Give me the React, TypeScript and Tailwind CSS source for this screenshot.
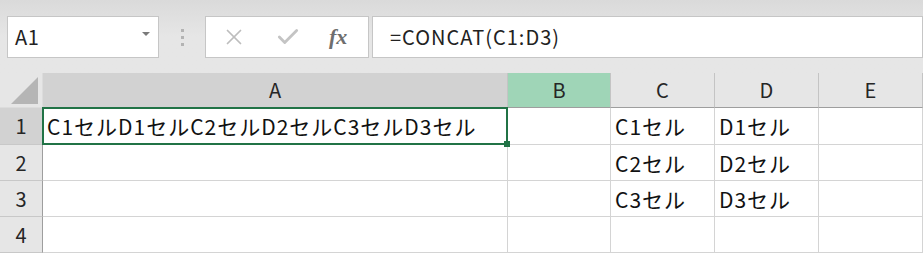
import { X, Check } from "lucide-react";

const cols = [
  { key: "A", w: "w-[465px]", head: "bg-[#d2d2d2]" },
  { key: "B", w: "w-[103px]", head: "bg-[#9fd5b7]" },
  { key: "C", w: "w-[104px]", head: "bg-[#e6e6e6]" },
  { key: "D", w: "w-[104px]", head: "bg-[#e6e6e6]" },
  { key: "E", w: "flex-1", head: "bg-[#e6e6e6]" },
];

const rows: { n: number; h: string; cells: string[] }[] = [
  { n: 1, h: "h-[37px]", cells: ["C1セルD1セルC2セルD2セルC3セルD3セル", "", "C1セル", "D1セル", ""] },
  { n: 2, h: "h-[36px]", cells: ["", "", "C2セル", "D2セル", ""] },
  { n: 3, h: "h-[36px]", cells: ["", "", "C3セル", "D3セル", ""] },
  { n: 4, h: "h-[36px]", cells: ["", "", "", "", ""] },
];

function App() {
  return (
    <div
      className="w-[923px] h-[253px] overflow-hidden bg-white text-[#111]"
      style={{ fontFamily: '"Noto Sans CJK JP", "Noto Sans", sans-serif' }}
    >
      {/* 数式バー */}
      <div className="h-[73px] bg-gradient-to-b from-[#dadada] via-[#e6e6e6] to-[#e6e6e6] flex items-start pt-[16px] pl-[7px]">
        <div className="w-[152px] h-[42px] bg-white border border-[#c6c6c6] flex items-center justify-between pl-[7px] pr-[8px]">
          <span className="text-[20px] leading-none text-[#222] tracking-[0.5px]">A1</span>
          <div className="w-0 h-0 border-l-[4px] border-r-[4px] border-t-[4px] border-l-transparent border-r-transparent border-t-[#7a7a7a] mb-[6px]" />
        </div>
        <div className="w-[46px] h-[42px] flex flex-col items-center justify-center gap-[4px]">
          <div className="w-[3px] h-[3px] bg-[#b3b3b3]" />
          <div className="w-[3px] h-[3px] bg-[#b3b3b3]" />
          <div className="w-[3px] h-[3px] bg-[#b3b3b3]" />
        </div>
        <div className="w-[164px] h-[42px] bg-white border border-[#c6c6c6] flex items-center pl-[15px] gap-[28px]">
          <X size={26} strokeWidth={1.6} color="#bdbdbd" />
          <Check size={26} strokeWidth={2.6} color="#c4c4c4" />
          <span
            className="text-[22px] italic font-bold text-[#6e6e6e] leading-none"
            style={{ fontFamily: '"Liberation Serif", "DejaVu Serif", serif' }}
          >
            fx
          </span>
        </div>
        <div className="ml-[3px] flex-1 h-[42px] bg-white border border-[#c6c6c6] flex items-center pl-[17px]">
          <span className="text-[20px] leading-none text-[#222] tracking-[1px]">=CONCAT(C1:D3)</span>
        </div>
      </div>

      {/* 列見出し */}
      <div className="flex h-[35px]">
        <div className="w-[43px] bg-[#e6e6e6] border-r border-b border-[#dcdcdc] relative">
          <svg className="absolute left-[11px] top-[4px]" width="28" height="28" viewBox="0 0 28 28">
            <polygon points="0,27 27,27 27,0" fill="#b5b5b5" />
          </svg>
        </div>
        {cols.map((c) => (
          <div
            key={c.key}
            className={`${c.w} ${c.head} border-r border-b border-r-[#c4c4c4] border-b-[#9e9e9e] flex items-center justify-center text-[20px] text-[#262626]`}
          >
            {c.key}
          </div>
        ))}
      </div>

      {/* 行 */}
      {rows.map((r) => (
        <div key={r.n} className={`flex ${r.h}`}>
          <div
            className={`w-[43px] ${r.n === 1 ? "bg-[#d2d2d2]" : "bg-[#e6e6e6]"} border-r border-b border-r-[#9e9e9e] border-b-[#c8c8c8] flex items-center justify-center text-[20px] text-[#262626]`}
          >
            {r.n}
          </div>
          {cols.map((c, i) => (
            <div
              key={c.key}
              className={`${c.w} border-r border-b border-[#d4d4d4] flex items-center pl-[4px] pt-[2px] text-[21px] tracking-[1px] whitespace-nowrap relative`}
            >
              {r.cells[i]}
              {r.n === 1 && c.key === "A" && (
                <>
                  <div className="absolute -left-[1px] -top-[1px] -right-[1px] -bottom-[1px] border-2 border-[#217346]" />
                  <div className="absolute z-10 -right-[3px] -bottom-[3px] w-[6px] h-[6px] bg-[#217346]" />
                </>
              )}
            </div>
          ))}
        </div>
      ))}
    </div>
  );
}

export default App;
